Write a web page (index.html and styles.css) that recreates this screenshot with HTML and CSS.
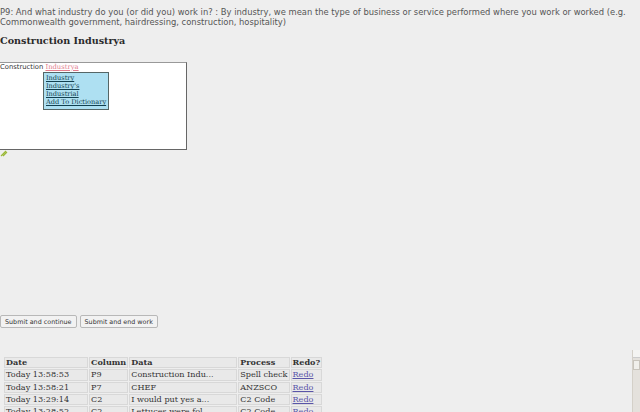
FILE: index.html
```html
<!DOCTYPE html>
<html lang="en">
<head>
    <meta charset="UTF-8">
    <title>Coding</title>
    <link rel="stylesheet" href="styles.css">
</head>
<body>
    <div class="page">
        <p class="question">P9: And what industry do you (or did you) work in? : By industry, we mean the type of business or service performed where you work or worked (e.g. Commonwealth government, hairdressing, construction, hospitality)</p>

        <h2 class="answer">Construction Industrya</h2>

        <!-- Spell check editor -->
        <div class="editor">
            <span>Construction </span><span class="misspelt">Industrya</span>
            <div class="suggest">
                <a href="#">Industry</a>
                <a href="#">Industry's</a>
                <a href="#">Industrial</a>
                <a href="#">Add To Dictionary</a>
            </div>
        </div>
        <div class="grip">
            <svg width="8" height="7" viewBox="0 0 8 7"><path d="M1 6 L6 1 M3 6 L7 2" stroke="#9ab836" stroke-width="1.2" fill="none"/></svg>
        </div>

        <div class="buttons">
            <button>Submit and continue</button>
            <button>Submit and end work</button>
        </div>

        <table class="history">
            <tr><th class="c-date">Date</th><th class="c-col">Column</th><th class="c-data">Data</th><th class="c-proc">Process</th><th class="c-redo">Redo?</th></tr>
            <tr><td>Today 13:58:53</td><td>P9</td><td>Construction Indu...</td><td>Spell check</td><td><a href="#">Redo</a></td></tr>
            <tr><td>Today 13:58:21</td><td>P7</td><td>CHEF</td><td>ANZSCO</td><td><a href="#">Redo</a></td></tr>
            <tr><td>Today 13:29:14</td><td>C2</td><td>I would put yes a...</td><td>C2 Code</td><td><a href="#">Redo</a></td></tr>
            <tr><td>Today 13:28:52</td><td>C2</td><td>Lettuces were fol...</td><td>C2 Code</td><td><a href="#">Redo</a></td></tr>
        </table>
    </div>

    <div class="scrollbar">
        <div class="arrow"></div>
        <div class="thumb"></div>
    </div>
</body>
</html>
```

FILE: styles.css
```css
* {
    margin: 0;
    padding: 0;
    box-sizing: border-box;
}

body {
    background-color: #eeeeee;
    font-family: "DejaVu Sans", sans-serif;
    color: #444;
    overflow: hidden;
    height: 412px;
}

.page {
    padding-top: 7px;
}

.question {
    font-size: 8.4px;
    line-height: 10px;
    color: #555;
    padding-right: 6px;
}

.answer {
    font-family: "DejaVu Serif", serif;
    font-size: 9.6px;
    font-weight: bold;
    color: #2a2a2a;
    margin-top: 8px;
    line-height: 12px;
}

.editor {
    position: relative;
    width: 187px;
    height: 88px;
    margin-top: 15px;
    background-color: white;
    border: 1px solid #666;
    border-top-color: #999;
    border-left: none;
    font-size: 6.8px;
    line-height: 8px;
    color: #333;
}

.misspelt {
    color: #e27b8c;
    text-decoration: underline;
    font-family: "DejaVu Serif", serif;
}

.suggest {
    position: absolute;
    left: 43px;
    top: 9px;
    width: 66px;
    height: 38px;
    background-color: #aee0f2;
    border: 1px solid #566;
    padding: 1px 2px;
    display: flex;
    flex-direction: column;
}

.suggest a {
    font-family: "DejaVu Serif", serif;
    font-size: 6.6px;
    line-height: 8px;
    color: #124050;
    white-space: nowrap;
}

.grip {
    height: 8px;
    line-height: 0;
}

.buttons {
    display: flex;
    gap: 3px;
    margin-top: 157px;
}

.buttons button {
    font-family: "DejaVu Sans", sans-serif;
    font-size: 6.4px;
    color: #333;
    background-color: #f2f2f2;
    border: 1px solid #b8b8b8;
    border-radius: 2px;
    padding: 0 4px;
    height: 13px;
}

.history {
    margin-top: 28px;
    margin-left: 3px;
    border-collapse: separate;
    border-spacing: 1px;
    font-family: "DejaVu Serif", serif;
    font-size: 8.1px;
    color: #333;
}

.history th,
.history td {
    text-align: left;
    font-weight: normal;
    padding: 0 1px;
    line-height: 9.25px;
    white-space: nowrap;
    border: 1px solid #d8d8d8;
    background-color: #e9e9e9;
}

.history th {
    font-weight: bold;
    color: #333;
}

.history a {
    color: #5a55a8;
}

.c-date { width: 84px; }
.c-col { width: 36px; }
.c-data { width: 108px; }
.c-proc { width: 49px; }
.c-redo { width: 29px; }

.scrollbar {
    position: absolute;
    right: 0;
    top: 350px;
    width: 8px;
    height: 62px;
    background-color: #e4e1dc;
    border-left: 1px solid #d4d0c8;
}

.scrollbar .arrow {
    height: 8px;
    background-color: #f4f4f2;
    border-bottom: 1px solid #ccc;
}

.scrollbar .thumb {
    margin-top: 2px;
    height: 10px;
    background-color: #f0efeb;
    border: 1px solid #c8c4bc;
}
```
